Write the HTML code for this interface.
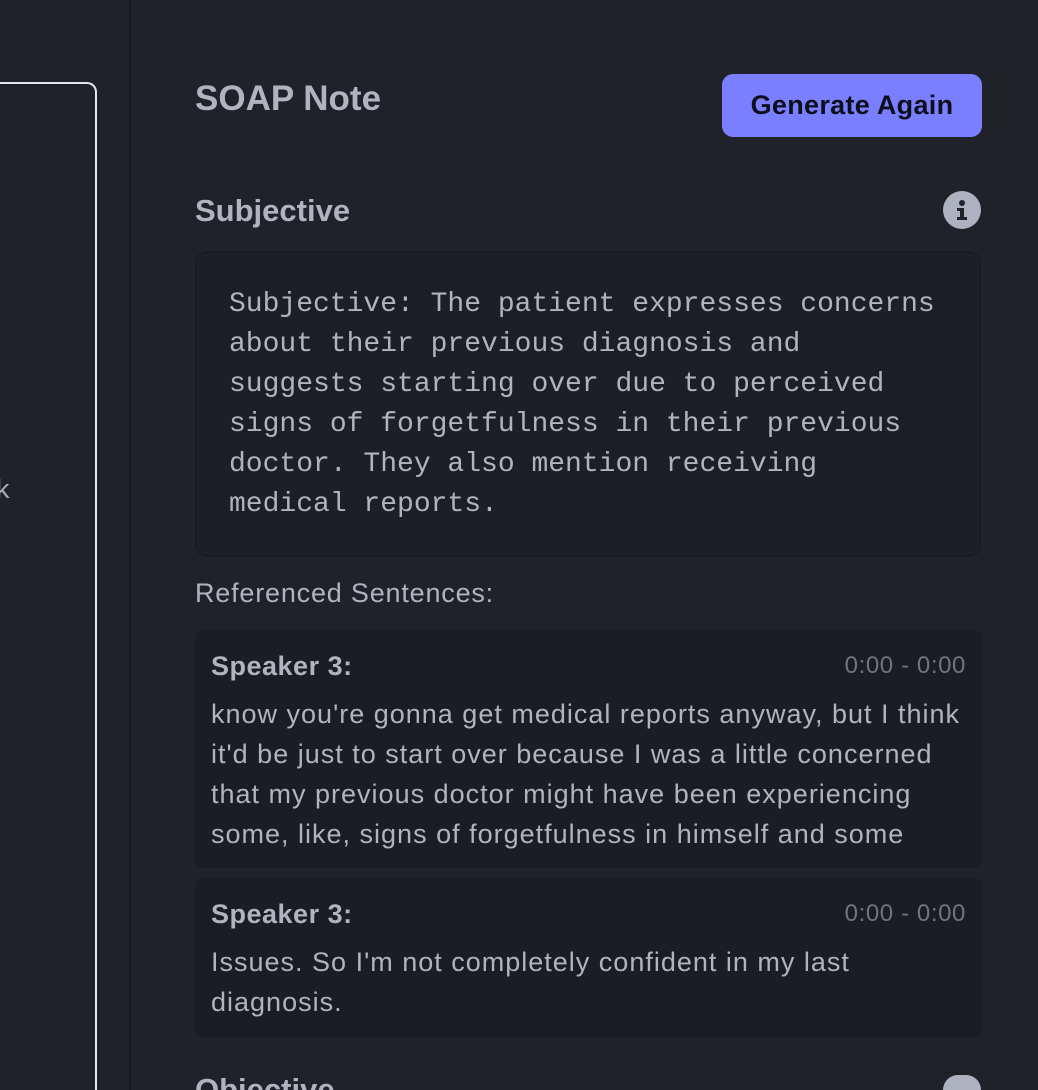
<!DOCTYPE html>
<html><head><style>
*{margin:0;padding:0;box-sizing:border-box}
html,body{width:1038px;height:1090px;overflow:hidden}
body{background:#1f2229;font-family:"Liberation Sans",sans-serif;color:#b1b4bf}
.wrap{position:relative;width:1038px;height:1090px;overflow:hidden}
.divider{position:absolute;left:129px;top:0;width:2px;height:1090px;background:#17191d}
.lbox{position:absolute;left:-20px;top:82px;width:117px;height:1008px;border:2px solid #e6e7ea;border-bottom:none;border-radius:10px 10px 0 0}
.k{position:absolute;left:-4px;top:474px;font-size:27px;color:#a9acb6}
.abs{position:absolute}
.title{left:195px;top:79px;font-size:35px;font-weight:bold}
.btn{left:722px;top:74px;width:260px;height:63px;background:#7a7fff;border-radius:11px;color:#0d0f1a;font-size:27px;font-weight:bold;display:flex;align-items:center;justify-content:center;letter-spacing:0.3px}
.h2{left:195px;top:193px;font-size:31px;font-weight:bold}
.info{left:943px;top:191px;width:38px;height:38px;border-radius:50%;background:#aeb1bf}
.sbox{left:195px;top:251px;width:786px;height:306px;background:#1c1f24;border:2px solid #191b1f;border-radius:12px;padding:32px 0 0 32px;font-family:"Liberation Mono",monospace;font-size:28px;line-height:40px;color:#b1b4bf;white-space:pre}
.ref{left:195px;top:578px;font-size:27px;letter-spacing:0.8px}
.card{left:195px;width:787px;background:#1b1d22;border-radius:8px;padding:16px 16px 0 16px;font-size:27px;line-height:40px;letter-spacing:1px;white-space:nowrap;overflow:hidden}
.sp{font-weight:bold;display:flex;justify-content:space-between;margin-bottom:8px;line-height:40px;letter-spacing:0.5px}
.ts{font-weight:normal;font-size:24px;color:#70747f;letter-spacing:0.6px}
.obj{left:195px;top:1072px;font-size:31px;font-weight:bold;height:18px;overflow:hidden;line-height:36px}
</style></head><body><div class="wrap">
<div class="lbox"></div>
<div class="k">k</div>
<div class="divider"></div>
<div class="abs title">SOAP Note</div>
<div class="abs btn">Generate Again</div>
<div class="abs h2">Subjective</div>
<div class="abs info"><svg width="38" height="38" viewBox="0 0 38 38"><circle cx="19" cy="12" r="3" fill="#1f2229"/><path d="M14 17h7v9h3v3H14v-3h3v-6h-3z" fill="#1f2229"/></svg></div>
<div class="abs sbox">Subjective: The patient expresses concerns
about their previous diagnosis and
suggests starting over due to perceived
signs of forgetfulness in their previous
doctor. They also mention receiving
medical reports.</div>
<div class="abs ref">Referenced Sentences:</div>
<div class="abs card" style="top:630px;height:238px"><div class="sp"><span>Speaker 3:</span><span class="ts">0:00 - 0:00</span></div>know you're gonna get medical reports anyway, but I think<br>it'd be just to start over because I was a little concerned<br>that my previous doctor might have been experiencing<br>some, like, signs of forgetfulness in himself and some</div>
<div class="abs card" style="top:878px;height:159px"><div class="sp"><span>Speaker 3:</span><span class="ts">0:00 - 0:00</span></div>Issues. So I'm not completely confident in my last<br>diagnosis.</div>
<div class="abs obj">Objective</div>
<div class="abs info" style="top:1075px;height:15px;border-radius:19px 19px 0 0"></div>
</div></body></html>
